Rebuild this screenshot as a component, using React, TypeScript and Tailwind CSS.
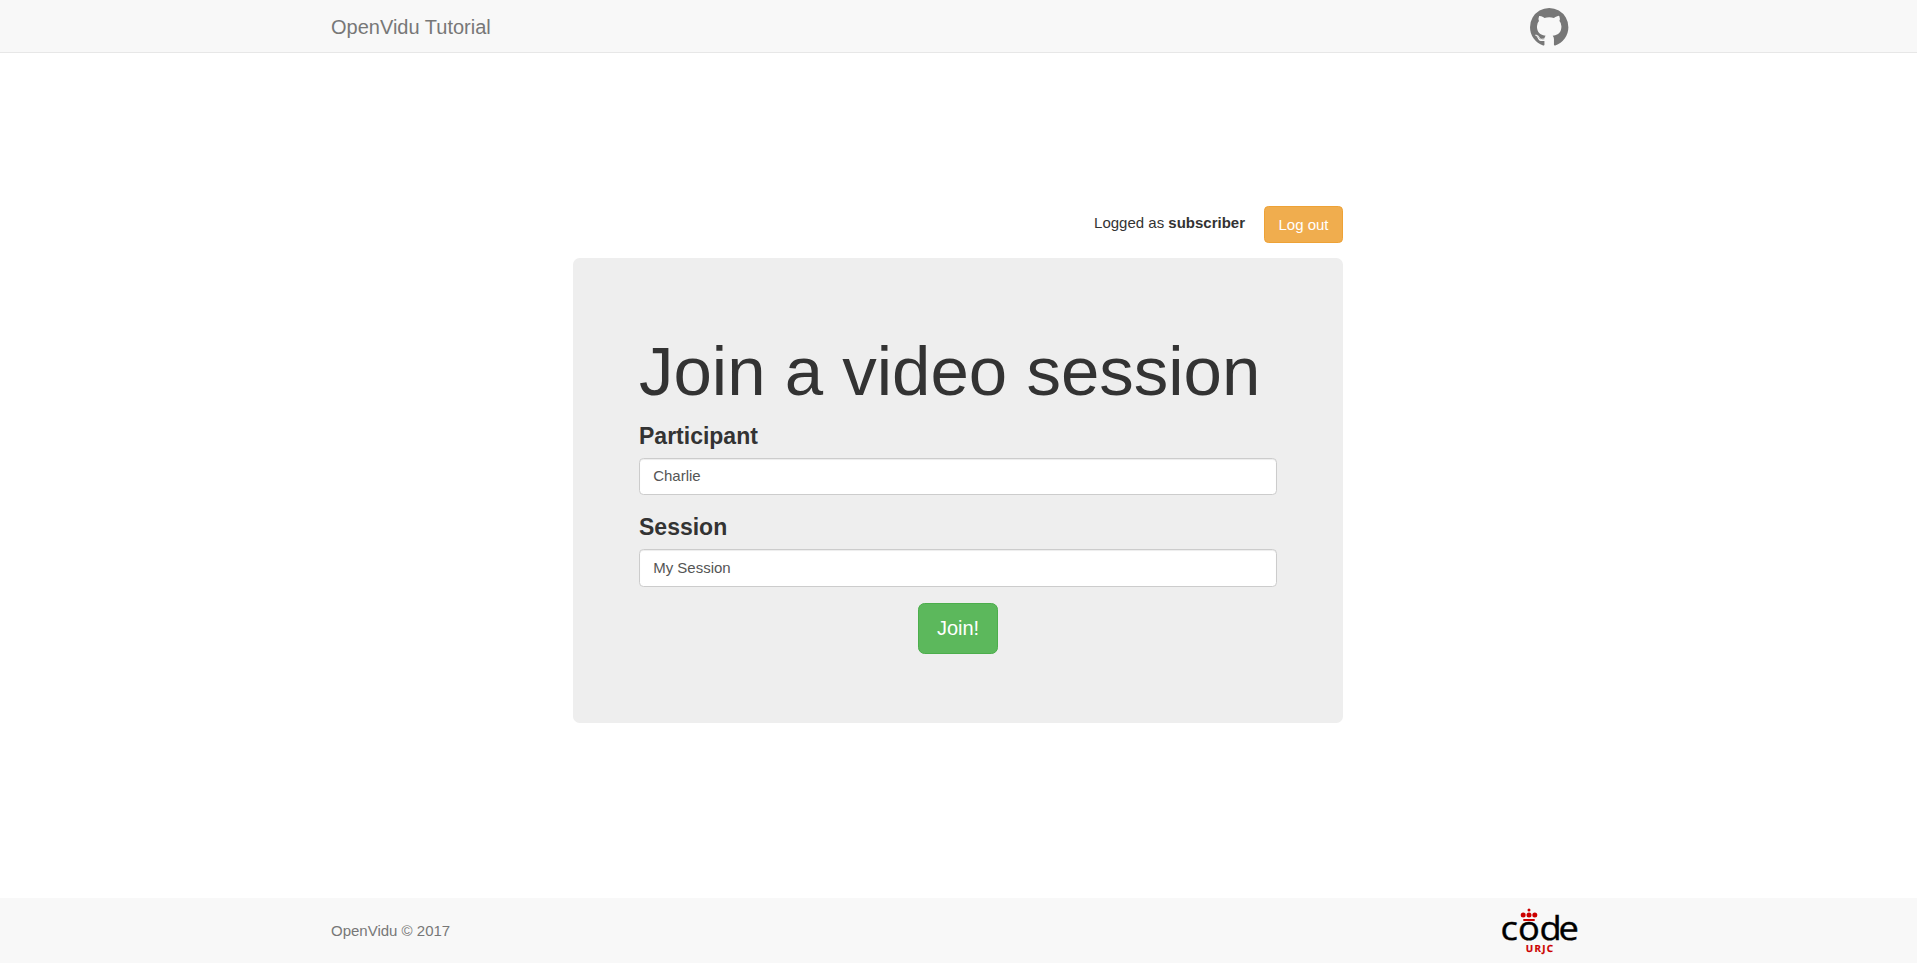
function GithubMark() {
  return (
    <svg className="block h-[37.7px] w-[38.4px]" viewBox="128 128 1536 1509" fill="currentColor" aria-hidden="true">
      <path d="M896 128q209 0 385.5 103t279.5 279.5 103 385.5q0 251-146.5 451.5t-378.5 277.5q-27 5-40-7t-13-30q0-3 .5-76.5t.5-134.5q0-97-52-142 57-6 102.5-18t94-39 81-66.5 53-105 20.5-150.5q0-119-79-206 37-91-8-204-28-9-81 11t-92 44l-38 24q-93-26-192-26t-192 26q-16-11-42.5-27t-83.5-38.5-85-13.5q-45 113-8 204-79 87-79 206 0 85 20.5 150t52.5 105 80.5 67 94 39 102.5 18q-39 36-49 103-21 10-45 15t-57 5-65.5-21.5-55.5-62.5q-19-32-48.5-52t-49.5-24l-20-3q-21 0-29 4.5t-5 11.5 9 14 13 12l7 5q22 10 43.5 38t31.5 51l10 23q13 38 44 61.5t67 30 69.5 7 55.5-3.5l23-4q0 38 .5 88.5t.5 54.5q0 18-13 30t-40 7q-232-77-378.5-277.5t-146.5-451.5q0-209 103-385.5t279.5-279.5 385.5-103zm-477 1103q3-7-7-12-10-3-13 2-3 7 7 12 9 6 13-2zm31 34q7-5-2-16-10-9-16-3-7 5 2 16 10 10 16 3zm30 45q9-7 0-19-8-13-17-6-9 5 0 18t17 7zm42 42q8-8-4-19-12-12-20-3-9 8 4 19 12 12 20 3zm57 25q3-11-13-16-15-4-19 7t13 15q15 6 19-6zm63 5q0-13-17-11-16 0-16 11 0 13 17 11 16 0 16-11zm58-10q-2-11-18-9-16 3-14 15t18 8 14-14z" />
    </svg>
  );
}

function CodeLogo() {
  return (
    <svg className="block h-[49px] w-[78px] overflow-visible" viewBox="0 0 78 49" role="img" aria-label="code URJC" textRendering="geometricPrecision">
      <g fill="#cc0000">
        <circle cx="28" cy="3.9" r="1.5" />
        <circle cx="22.2" cy="9" r="2.5" />
        <circle cx="28" cy="9" r="2.5" />
        <circle cx="33.8" cy="9" r="2.5" />
        <rect x="22.3" y="13" width="11.4" height="2" />
      </g>
      <text
        x="-0.4 15.4 35 52.2"
        y="34.2"
        transform="scale(1.1 1)"
        fontFamily="'Open Sans', 'Noto Sans', sans-serif"
        fontSize="33"
        fill="#000"
        stroke="#000"
        strokeWidth="0.4"
      >
        code
      </text>
      <text x="24.8" y="46" fontFamily="'Noto Sans', sans-serif" fontWeight="700" fontSize="9.8" textLength="27.2" fill="#cc0000" stroke="#cc0000" strokeWidth="0.2">
        URJC
      </text>
    </svg>
  );
}

function Field({ id, label, value }: { id: string; label: string; value: string }) {
  return (
    <div className="mb-[16.5px]">
      <label htmlFor={id} className="mb-[5px] block text-[23px] leading-[33px] font-bold">
        {label}
      </label>
      <input
        id={id}
        defaultValue={value}
        className="block h-[37.4px] w-full rounded-[4.4px] border border-[#ccc] bg-white px-[13.2px] pb-[1px] text-[15px] text-[#555] shadow-[inset_0_1px_1px_rgba(0,0,0,0.075)] outline-none"
      />
    </div>
  );
}

export default function App() {
  return (
    <div className="flex h-screen flex-col overflow-hidden bg-white font-['Liberation_Sans',Arial,sans-serif] text-[15px] leading-[22px] text-[#333]">
      <header className="h-[53px] shrink-0 border-b border-[#e7e7e7] bg-[#f8f8f8]">
        <div className="mx-auto flex h-full w-[1255px] items-center justify-between pt-[2px] pr-[17.5px]">
          <a href="#" className="text-[20px] leading-[22px] text-[#777]">OpenVidu Tutorial</a>
          <a href="#" aria-label="GitHub" className="text-[#777]">
            <GithubMark />
          </a>
        </div>
      </header>

      <main className="mx-auto w-[771px] grow pt-[153px] pr-px">
        <div className="mb-[15px] flex h-[37px] items-start justify-end">
          <p className="mr-[19px] pt-[6px]">
            Logged as <strong className="font-bold">subscriber</strong>
          </p>
          <button className="h-[37.4px] w-[79px] rounded-[4.4px] border border-[#eea236] bg-[#f0ad4e] text-white">
            Log out
          </button>
        </div>

        <section className="h-[465px] rounded-[6.6px] bg-[#eee] px-[66px] pt-[76px]">
          <h1 className="mb-[9.4px] text-[69px] leading-[76.2px] font-medium whitespace-nowrap">Join a video session</h1>
          <form onSubmit={(e) => e.preventDefault()}>
            <Field id="participant" label="Participant" value="Charlie" />
            <Field id="session" label="Session" value="My Session" />
            <div className="flex justify-center">
              <button className="h-[51px] w-[80px] rounded-[6.6px] border border-[#4cae4c] bg-[#5cb85c] pb-[1.5px] text-[20px] leading-[26px] text-white">
                Join!
              </button>
            </div>
          </form>
        </section>
      </main>

      <footer className="h-[65px] shrink-0 bg-[#f8f8f8]">
        <div className="mx-auto flex h-full w-[1255px] items-center justify-between pr-[7px]">
          <span className="text-[#777]">OpenVidu © 2017</span>
          <CodeLogo />
        </div>
      </footer>
    </div>
  );
}
